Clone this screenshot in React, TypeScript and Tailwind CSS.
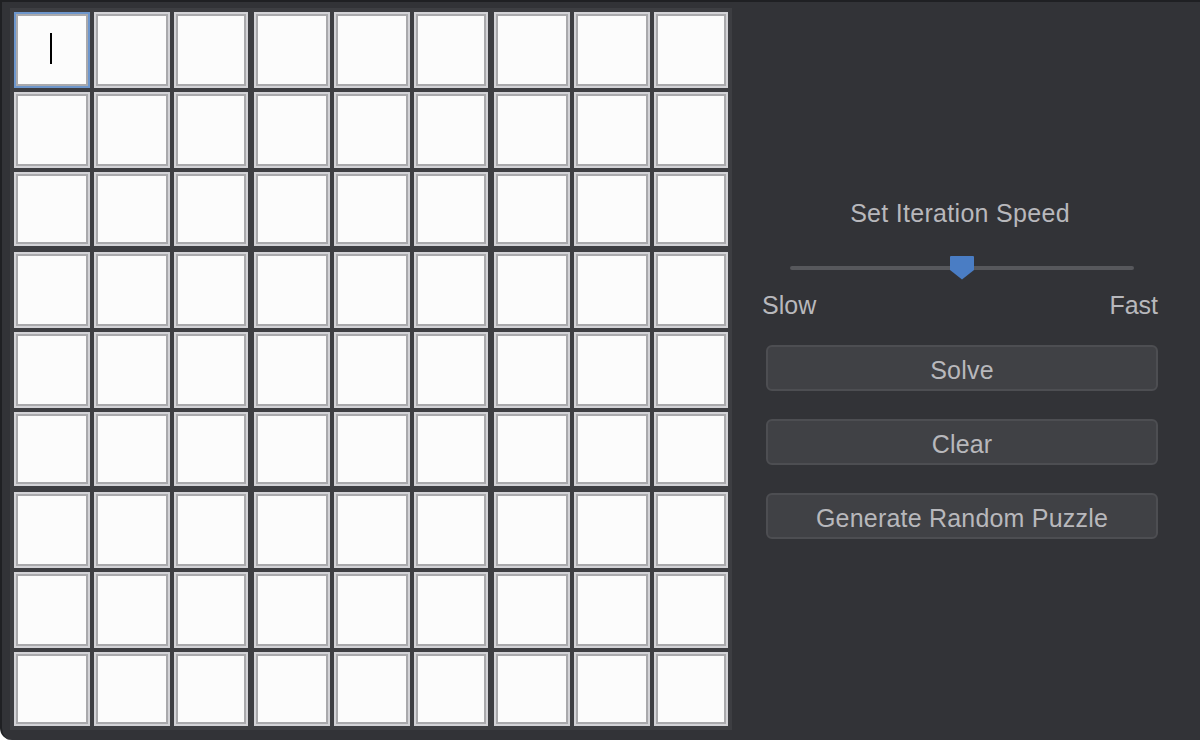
import { useState } from "react";

function Cell({ selected }: { selected?: boolean }) {
  return (
    <div
      className={
        "relative border-2 bg-[#fcfcfc] shadow-[inset_0_0_0_2px_#a9a9ac] " +
        (selected ? "border-[#6d96cc]" : "border-[#d3d3d7]")
      }
    >
      {selected && (
        <div className="absolute left-[34px] top-[19px] h-[31px] w-[2px] bg-black" />
      )}
    </div>
  );
}

function Block({ index }: { index: number }) {
  return (
    <div className="grid grid-cols-[76px_76px_74px] grid-rows-[76px_76px_74px] gap-[4px]">
      {Array.from({ length: 9 }).map((_, i) => (
        <Cell key={i} selected={index === 0 && i === 0} />
      ))}
    </div>
  );
}

function SpeedSlider() {
  const [value] = useState(50);
  return (
    <div className="relative h-[24px] w-full">
      <div className="absolute left-[28px] right-[24px] top-[10px] h-[4px] rounded-full bg-[#57585c]" />
      <svg
        className="absolute top-0"
        style={{ left: `${28 + (344 * value) / 100 - 12}px` }}
        width="24"
        height="24"
        viewBox="0 0 24 24"
      >
        <path d="M1 0 H23 Q24 0 24 1 V14 L12 23.5 L0 14 V1 Q0 0 1 0 Z" fill="#4a7dc4" />
      </svg>
    </div>
  );
}

function Button({ label }: { label: string }) {
  return (
    <button className="ml-[4px] flex h-[46px] w-[392px] items-center justify-center rounded-[6px] border-2 border-[#4d4e52] bg-[#404145] pt-[4px] text-[25px] leading-none tracking-[0.2px] text-[#b8b8bc]">
      {label}
    </button>
  );
}

export default function App() {
  return (
    <div className="h-[740px] w-[1200px] bg-white font-['Liberation_Sans',Arial,sans-serif]">
      <div className="flex h-full w-full rounded-bl-[12px] border-l-2 border-t-2 border-[#1f2023] bg-[#323337]">
        {/* sudoku board */}
        <div className="ml-[8px] mt-[6px] self-start bg-[#3d3e42] p-[4px]">
          <div className="grid grid-cols-3 gap-[6px]">
            {Array.from({ length: 9 }).map((_, i) => (
              <Block key={i} index={i} />
            ))}
          </div>
        </div>

        {/* controls */}
        <div className="ml-[30px] flex w-[396px] flex-col justify-center pb-[5px] text-[#b8b8bc]">
          <div className="text-center text-[25px] leading-[30px] tracking-[0.3px]">Set Iteration Speed</div>
          <div className="mt-[28px]">
            <SpeedSlider />
          </div>
          <div className="mt-[10px] flex justify-between text-[25px] leading-[30px]">
            <span>Slow</span>
            <span>Fast</span>
          </div>
          <div className="mt-[25px] flex flex-col gap-[28px]">
            <Button label="Solve" />
            <Button label="Clear" />
            <Button label="Generate Random Puzzle" />
          </div>
        </div>
      </div>
    </div>
  );
}
